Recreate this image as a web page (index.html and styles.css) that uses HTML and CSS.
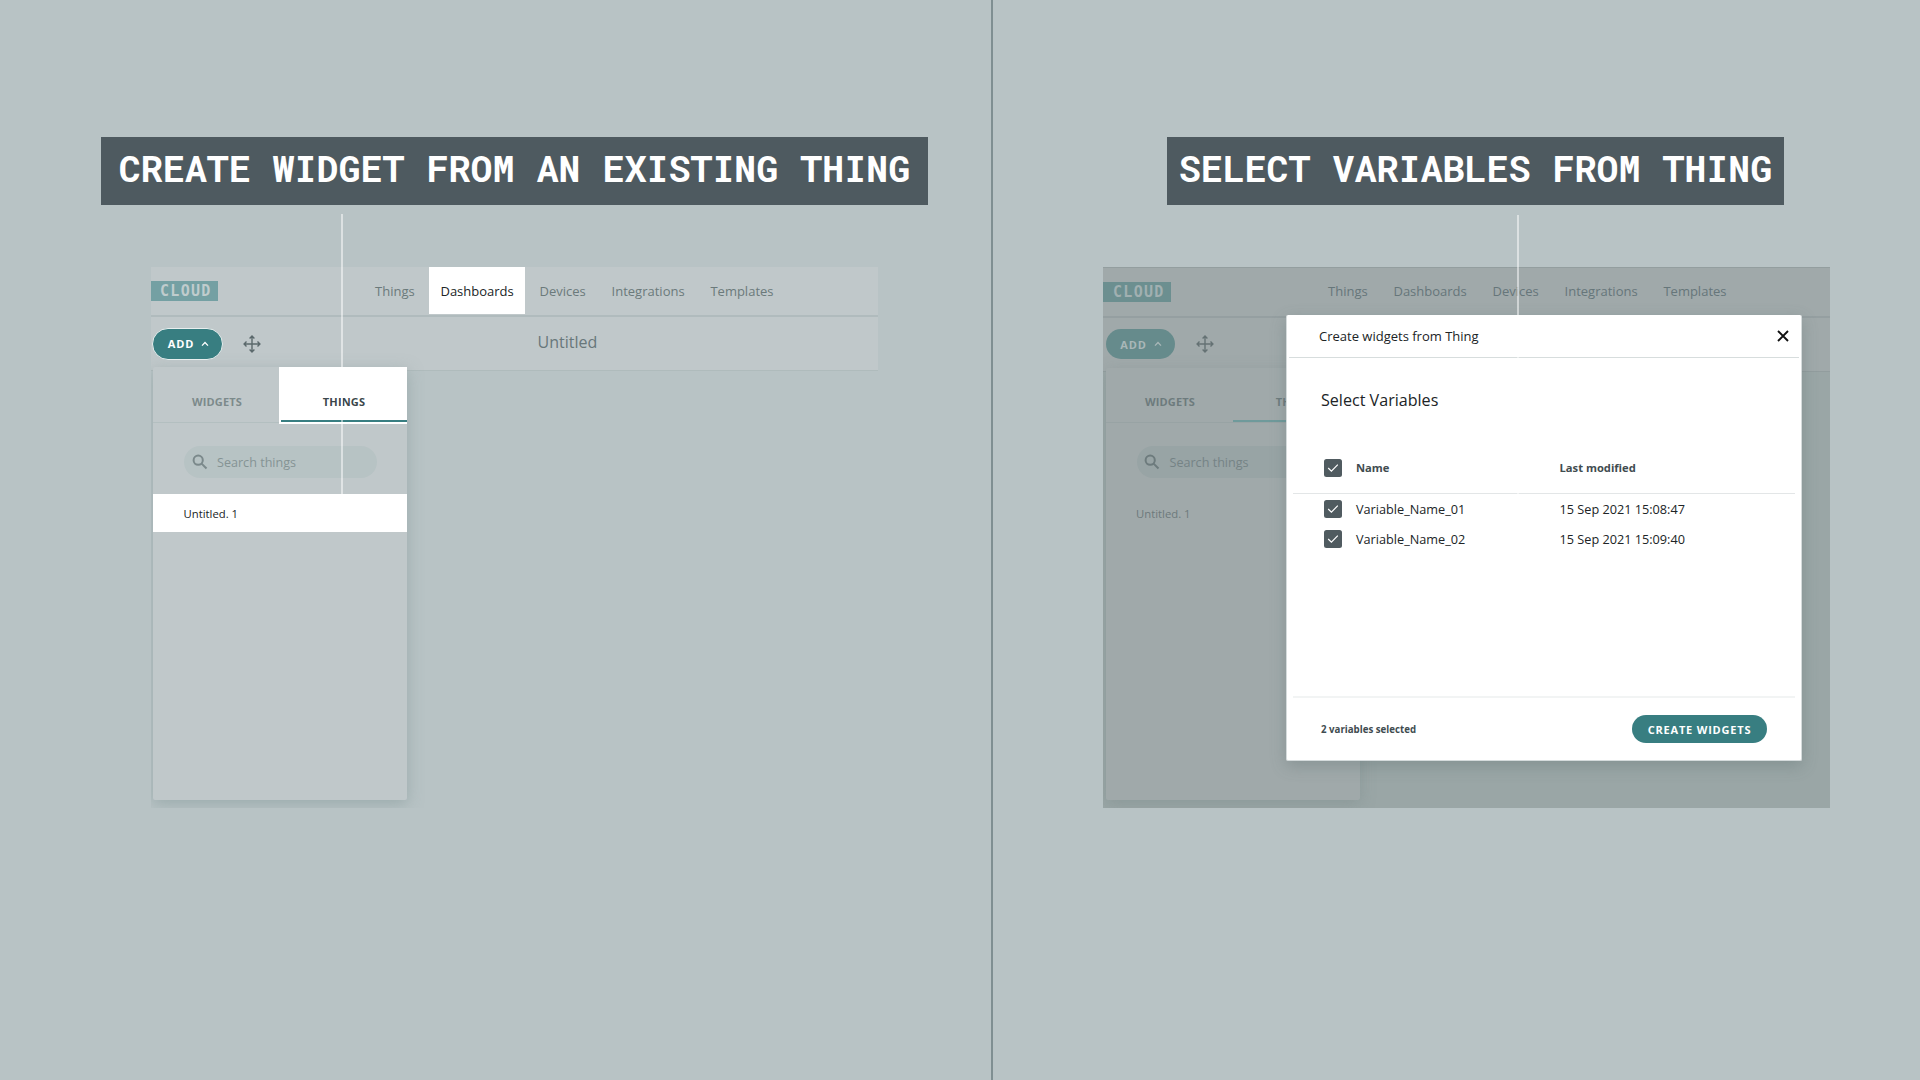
FILE: index.html
```html
<!DOCTYPE html>
<html lang="en">
<head>
<meta charset="utf-8">
<title>Create widgets from Thing</title>
<link rel="stylesheet" href="styles.css">
</head>
<body>
<main class="board">
  <section class="half half-left">
    <h1 class="caption">CREATE WIDGET FROM AN EXISTING THING</h1>
    <div class="shot">
      <header class="nav">
        <span class="logo">CLOUD</span>
        <nav class="links"><a>Things</a><a class="active">Dashboards</a><a>Devices</a><a>Integrations</a><a>Templates</a></nav>
      </header>
      <div class="toolbar">
        <button class="add">ADD <svg width="8" height="6" viewBox="0 0 8 6"><path d="M1 4.6 4 1.5 7 4.6"/></svg></button>
        <svg class="move" width="18" height="18" viewBox="0 0 18 18"><path d="M9 1.2V16.8M1.2 9H16.8M6.6 3.5 9 1.1 11.4 3.5M6.6 14.5 9 16.9 11.4 14.5M3.5 6.6 1.1 9 3.5 11.4M14.5 6.6 16.9 9 14.5 11.4"/></svg>
        <span class="title">Untitled</span>
      </div>
      <div class="stage">
        <aside class="panel">
          <div class="tabs"><span class="tab">WIDGETS</span><span class="tab selected">THINGS</span></div>
          <div class="search"><svg width="16" height="16" viewBox="0 0 16 16"><circle cx="6.2" cy="6.2" r="4.6"/><path d="M9.6 9.6 14.5 14.5"/></svg>Search things</div>
          <div class="item">Untitled. 1</div>
        </aside>
      </div>
    </div>
    <i class="pointer pointer-left"></i>
  </section>
  <section class="half half-right">
    <h1 class="caption">SELECT VARIABLES FROM THING</h1>
    <div class="shot dimmed">
      <header class="nav">
        <span class="logo">CLOUD</span>
        <nav class="links"><a>Things</a><a>Dashboards</a><a>Devices</a><a>Integrations</a><a>Templates</a></nav>
      </header>
      <div class="toolbar">
        <button class="add">ADD <svg width="8" height="6" viewBox="0 0 8 6"><path d="M1 4.6 4 1.5 7 4.6"/></svg></button>
        <svg class="move" width="18" height="18" viewBox="0 0 18 18"><path d="M9 1.2V16.8M1.2 9H16.8M6.6 3.5 9 1.1 11.4 3.5M6.6 14.5 9 16.9 11.4 14.5M3.5 6.6 1.1 9 3.5 11.4M14.5 6.6 16.9 9 14.5 11.4"/></svg>
      </div>
      <div class="stage">
        <aside class="panel">
          <div class="tabs"><span class="tab">WIDGETS</span><span class="tab selected">THINGS</span></div>
          <div class="search"><svg width="16" height="16" viewBox="0 0 16 16"><circle cx="6.2" cy="6.2" r="4.6"/><path d="M9.6 9.6 14.5 14.5"/></svg>Search things</div>
          <div class="item">Untitled. 1</div>
        </aside>
      </div>
      <div class="modal">
        <div class="modal-head"><span>Create widgets from Thing</span><svg width="12" height="12" viewBox="0 0 12 12"><path d="M1 1 11 11M11 1 1 11"/></svg></div>
        <h2>Select Variables</h2>
        <div class="row row-head"><svg class="check" width="18" height="18" viewBox="0 0 18 18"><path d="M4.2 9 7.4 12.2 13.8 5.6"/></svg><span>Name</span><span>Last modified</span></div>
        <div class="rows">
          <div class="row"><svg class="check" width="18" height="18" viewBox="0 0 18 18"><path d="M4.2 9 7.4 12.2 13.8 5.6"/></svg><span>Variable_Name_01</span><span>15 Sep 2021 15:08:47</span></div>
          <div class="row"><svg class="check" width="18" height="18" viewBox="0 0 18 18"><path d="M4.2 9 7.4 12.2 13.8 5.6"/></svg><span>Variable_Name_02</span><span>15 Sep 2021 15:09:40</span></div>
        </div>
        <div class="modal-foot"><span>2 variables selected</span><button class="create">CREATE WIDGETS</button></div>
      </div>
    </div>
    <i class="pointer pointer-right"></i>
  </section>
</main>
</body>
</html>
```
FILE: styles.css
```css
* { box-sizing: border-box; }
body { margin: 0; background: #b8c3c5; font-family: "Open Sans", sans-serif; color: #202426; }
button { border: 0; padding: 0; font-family: inherit; }
svg { fill: none; stroke: currentColor; flex: none; }

.board { display: flex; width: 1920px; height: 1080px; overflow: hidden; }
.half { position: relative; height: 1080px; padding-top: 137px; }
.half-left { width: 993px; border-right: 2px solid #7f8f92; }
.half-right { width: 927px; }

.caption {
  height: 68px; margin: 0 0 62px; background: #4e5a60; color: #fff;
  font: 700 36.65px/62px "Roboto Mono", "DejaVu Sans Mono", monospace;
  text-align: center; white-space: nowrap;
}
.half-left .caption { width: 827px; margin-left: 101px; }
.half-right .caption { width: 617px; margin-left: 174px; }

.pointer { position: absolute; width: 2px; background: rgba(255, 255, 255, .5); }
.pointer-left { left: 341px; top: 214px; height: 280px; }
.pointer-right { left: 524px; top: 215px; height: 280px; }

.shot { position: relative; width: 727px; height: 541px; overflow: hidden; }
.half-left .shot { margin-left: 151px; }
.half-right .shot { margin-left: 110px; }

.nav { display: flex; align-items: center; height: 50px; background: #c0c8ca; border-bottom: 2px solid #b0bbbd; padding-bottom: 1px; }
.logo {
  width: 67px; height: 20px; padding-left: 9px; background: #74a0a3; color: #c0cccd;
  font: 700 15px/20px "DejaVu Sans Mono", monospace; letter-spacing: 1.3px;
}
.links { display: flex; align-self: stretch; align-items: center; gap: 25.8px; margin-left: 157px; font-size: 13px; color: #6b7a7b; }
.links .active { display: flex; align-items: center; align-self: stretch; margin: 0 -11px; padding: 0 11px; background: #fff; color: #202426; }

.toolbar { display: flex; align-items: center; height: 54px; background: #c0c8ca; border-bottom: 1px solid #afbbbc; padding-left: 1px; }
.add {
  display: flex; align-items: center; justify-content: center; gap: 7px; width: 71px; height: 32px; border: 1px solid #e8eeee; padding-left: 2px;
  border-radius: 16px; background: #387e81; color: #fff; font-weight: 700; font-size: 11px; letter-spacing: .9px;
}
.add svg { stroke-width: 1.3; }
.move { margin-left: 20px; color: #5b696c; stroke-width: 1.4; }
.title { margin-left: 276.5px; font-size: 16px; color: #68777a; padding-bottom: 4px; }

.stage { height: 437px; padding-left: 2px; margin-top: -4px; }
.panel { width: 254px; height: 433px; background: #c0c8ca; border-radius: 2px; box-shadow: 0 4px 15px rgba(125, 148, 147, .5); }
.tabs { display: flex; height: 56px; border-bottom: 1px solid #b3bfc0; }
.tab { flex: 1; padding: 1px 0 0 2px; line-height: 67px; text-align: center; font-size: 11px; font-weight: 700; letter-spacing: .15px; color: #7c8a8b; }
.selected { border-bottom: 2px solid #6f9a9b; }
.half-left .selected { position: relative; flex: 0 0 128px; height: 57px; background: #fff; color: #3b474b; border-bottom-color: #fff; }
.half-left .selected::after { content: ""; position: absolute; left: 2px; right: 0; bottom: 0; height: 2px; background: #387e81; }
.search {
  display: flex; align-items: center; gap: 9.5px; width: 193px; height: 32px; margin: 23px 0 16px 31px; padding-left: 7.5px;
  border-radius: 16px; background: #b7c3c4; color: #859394; font-size: 12.6px;
}
.search svg { color: #7b898b; stroke-width: 2; }
.item { height: 38px; padding-left: 30.5px; font-size: 11.3px; line-height: 39px; }
.half-left .item { background: #fff; }

.dimmed { background: #9aa6a6; }
.dimmed .nav { height: 51px; padding-bottom: 1px; background: #a0a9aa; border-top: 1px solid #939e9f; border-bottom-color: #959fa1; }
.dimmed .logo { width: 68px; padding-left: 10px; background: #6c8f90; color: #a1b0b1; }
.dimmed .links { padding-bottom: 1px; color: #66767a; }
.dimmed .toolbar { background: #a0a9aa; border-color: #929d9e; padding: 0 0 1px 1.5px; }
.dimmed .add { border-color: transparent; background: #668b8c; background-clip: padding-box; color: #a9b7b8; }
.dimmed .move { color: #657274; }
.dimmed .stage { padding-left: 3px; }
.dimmed .panel { height: 432px; background: #a0a9aa; box-shadow: 0 4px 15px rgba(112, 128, 128, .35); }
.dimmed .tabs { border-color: #98a3a4; height: 55px; }
.dimmed .tab { padding: 0 0 0 1px; color: #6d7b7d; }
.dimmed .search { margin-left: 30.5px; background: #98a4a5; color: #758385; }
.dimmed .search svg { color: #6d7b7d; }
.dimmed .item { padding-left: 30px; color: #6d7a7c; }

.modal {
  position: absolute; left: 183px; top: 48px; width: 516px; height: 446px; background: #fff; border: solid #d5dbdc;
  border-width: 0 1px 1px; border-radius: 2px; box-shadow: 0 5px 16px rgba(80, 98, 98, .3);
}
.modal-head { display: flex; align-items: center; justify-content: space-between; height: 43px; margin: 0 2px; padding: 0 10px 0 30px; border-bottom: 1px solid #d7dddd; font-size: 13px; }
.modal-head svg { color: #111; stroke-width: 1.9; }
.modal h2 { margin: 31px 0 0 34px; font-weight: 400; font-size: 16.1px; line-height: 22px; }
.row { display: grid; grid-template-columns: 32px 203.5px 1fr; align-items: center; height: 30px; padding-left: 31px; font-size: 12.7px; }
.row span { padding-bottom: 1px; }
.check { background: #505b60; border-radius: 2.5px; color: #fff; stroke-width: 1.2; }
.row-head { height: 51px; margin: 32px 6px 0; border-bottom: 1px solid #e3e6e7; font-size: 11.2px; font-weight: 700; color: #414c50; }
.rows { height: 204px; margin: 0 6px; border-bottom: 2px solid #f2f4f4; }
.modal-foot { display: flex; align-items: center; justify-content: space-between; padding: 17px 34px 0 34px; font-size: 9.7px; font-weight: 700; color: #414c50; }
.create { width: 135px; height: 28px; border-radius: 14px; background: #387e81; color: #fff; font-weight: 700; font-size: 11px; letter-spacing: .8px; }
```
